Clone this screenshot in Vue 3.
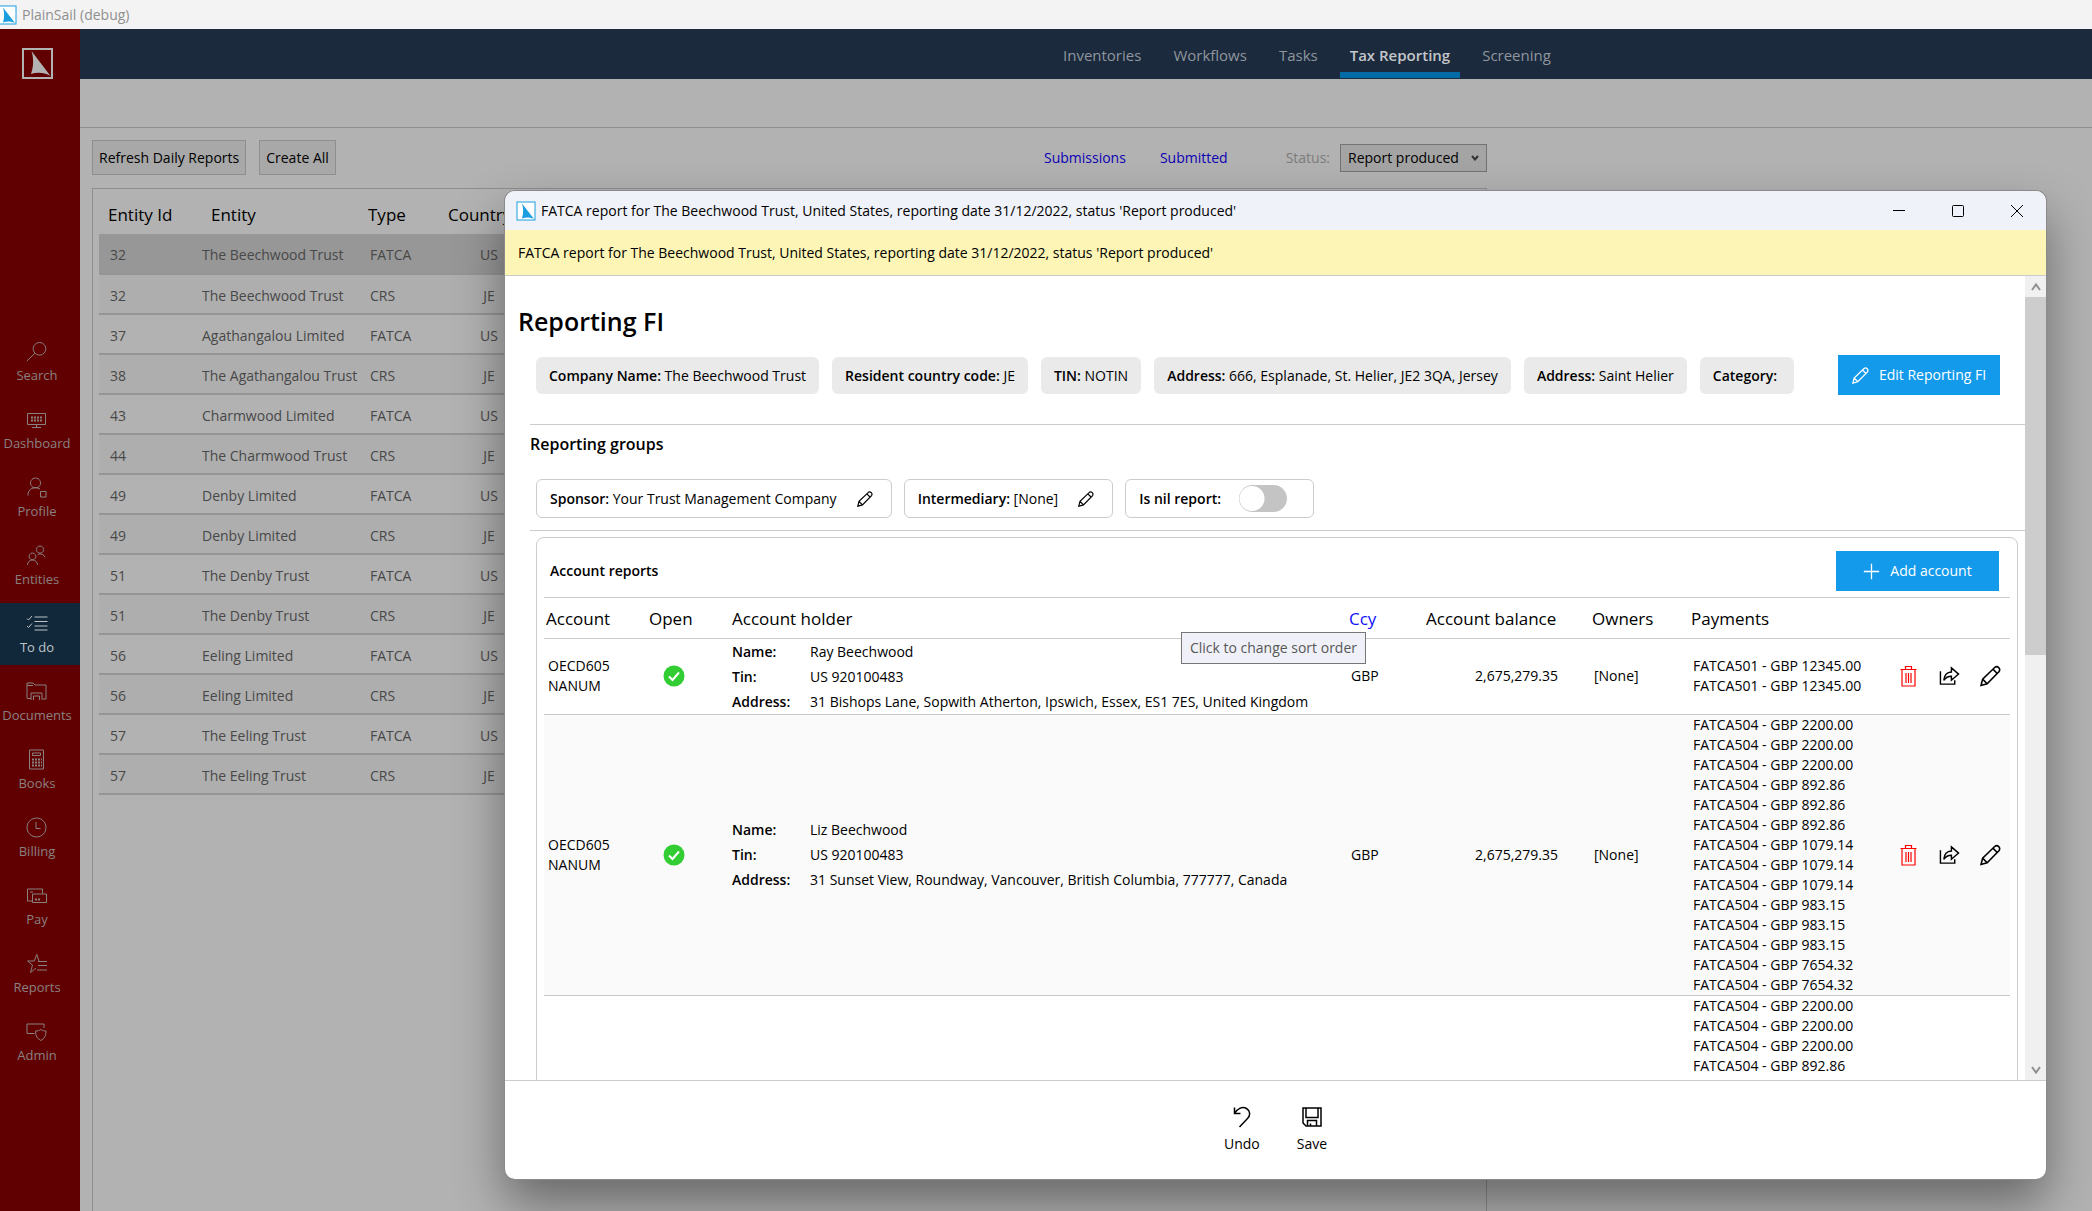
<script setup>
import { ref } from 'vue'

const dialogTitle = "FATCA report for The Beechwood Trust, United States, reporting date 31/12/2022, status 'Report produced'"
const tabs = ['Inventories', 'Workflows', 'Tasks', 'Tax Reporting', 'Screening']
const activeTab = ref('Tax Reporting')
const status = ref('Report produced')
const nil = ref(false)

const navItems = [
  { name: 'Search', d: ['M13.5 1.5a6.3 6.3 0 1 0 .01 0M9 12.2L.8 20'] },
  { name: 'Dashboard', d: ['M1.500 4.500h18v11h-18zM10.500 15.500v2.500M6 18.500h9'], dots: 'M5 8.500h11M5 11.500h11' },
  { name: 'Profile', d: ['M9.500 1a5 5 0 1 0 .01 0M2 18.500a7.500 7.500 0 0 1 12-6.500M14.500 14.500h5.500v5.500h-5.500z'] },
  { name: 'Entities', d: ['M14 1a3.600 3.600 0 1 0 .01 0M6.500 8a3.400 3.400 0 1 0 .01 0M1.500 20a5 5 0 0 1 10 0M11.800 9.500A5 5 0 0 1 19 12.500'] },
  { name: 'To do', d: ['M8.500 4h13M8.500 8.500h13M8.500 13h13M8.500 17h13M1 5.500l1.500 1.500 3.500-4M1 13l1.500 1.500 3.500-4'] },
  { name: 'Documents', d: ['M1 17V2h6l2 2h11v14h-3M1 4.500h6M1 17.500h4M5 19v-7h11v7M7.500 19v-4h6v4'] },
  { name: 'Books', d: ['M3.500 1h14v19h-14zM6.500 4h8v2.500h-8z'], dots: 'M6 10.500h10M6 13.500h10M6 16.500h10' },
  { name: 'Billing', d: ['M10.500 1a9.500 9.500 0 1 0 .01 0M10 5v6.500h4.500'] },
  { name: 'Pay', d: ['M6.500 16H1.500V4h15v4.500M6.500 9h14v8.500h-14zM4 7h3'], dots: 'M9 14.500h5' },
  { name: 'Reports', d: ['M13 8L10.800 1.500 8.200 8H1.500l5 4-2 7.500 5.500-4.500M12 8.500h9M12 12.500h9M11 17h10'] },
  { name: 'Admin', d: ['M8.500 12.500H1V3h17v4M14.800 8.500c2 1.200 3.500 1.500 5.200 1.500 0 5-1.500 7.500-5.200 9.500-3.700-2-5.300-4.500-5.300-9.500 2 0 3.500-.3 5.300-1.500z'] },
]

const entities = [
  ['32', 'The Beechwood Trust', 'FATCA', 'US'],
  ['32', 'The Beechwood Trust', 'CRS', 'JE'],
  ['37', 'Agathangalou Limited', 'FATCA', 'US'],
  ['38', 'The Agathangalou Trust', 'CRS', 'JE'],
  ['43', 'Charmwood Limited', 'FATCA', 'US'],
  ['44', 'The Charmwood Trust', 'CRS', 'JE'],
  ['49', 'Denby Limited', 'FATCA', 'US'],
  ['49', 'Denby Limited', 'CRS', 'JE'],
  ['51', 'The Denby Trust', 'FATCA', 'US'],
  ['51', 'The Denby Trust', 'CRS', 'JE'],
  ['56', 'Eeling Limited', 'FATCA', 'US'],
  ['56', 'Eeling Limited', 'CRS', 'JE'],
  ['57', 'The Eeling Trust', 'FATCA', 'US'],
  ['57', 'The Eeling Trust', 'CRS', 'JE'],
]

const facts = [
  ['Company Name:', 'The Beechwood Trust'],
  ['Resident country code:', 'JE'],
  ['TIN:', 'NOTIN'],
  ['Address:', '666, Esplanade, St. Helier, JE2 3QA, Jersey'],
  ['Address:', 'Saint Helier'],
  ['Category:', ''],
]

const pay = (code, ...amounts) => amounts.map((a) => `${code} - GBP ${a}`)
const accounts = [
  {
    name: 'Ray Beechwood',
    address: '31 Bishops Lane, Sopwith Atherton, Ipswich, Essex, ES1 7ES, United Kingdom',
    payments: pay('FATCA501', '12345.00', '12345.00'),
  },
  {
    name: 'Liz Beechwood',
    address: '31 Sunset View, Roundway, Vancouver, British Columbia, 777777, Canada',
    payments: pay('FATCA504', '2200.00', '2200.00', '2200.00', '892.86', '892.86', '892.86', '1079.14',
      '1079.14', '1079.14', '983.15', '983.15', '983.15', '7654.32', '7654.32'),
  },
]
const nextPayments = pay('FATCA504', '2200.00', '2200.00', '2200.00', '892.86')
const pencil = 'M1 19l1.500-6L14.200 1.700c2.600-1.800 5.700 1.200 4 4L6.800 17.400zM2.500 13l4.300 4.400M12.300 3.500l4.300 4.300'
</script>

<template>
  <div class="app">
    <header class="titlebar">
      <svg class="logo" viewBox="0 0 20 20"><rect x="1" y="1" width="18" height="18" /><path d="M6 2.500L18 18c-4-2-8-2-12-.5 1.500-5 1.500-10 0-15z" /></svg>
      <span>PlainSail (debug)</span>
    </header>

    <div class="body">
      <nav class="sidebar" aria-label="Main">
        <svg class="brand" viewBox="0 0 31 31"><rect x="1" y="1" width="29" height="29" /><path d="M9.500 3L28.500 28c-6-3.500-13-4-19.500-2 2.500-7 3-15 .5-23z" /></svg>
        <div class="side-items">
          <a v-for="n in navItems" :key="n.name" href="#" class="side" :class="{ on: n.name === 'To do' }">
            <svg viewBox="0 0 22 21"><path v-for="p in n.d" :key="p" :d="p" /><path v-if="n.dots" class="dots" :d="n.dots" /></svg>
            <span>{{ n.name }}</span>
          </a>
        </div>
      </nav>

      <div class="page">
        <nav class="topnav" aria-label="Sections">
          <a v-for="t in tabs" :key="t" href="#" class="tab" :class="{ on: t === activeTab }" @click.prevent="activeTab = t">{{ t }}</a>
        </nav>
        <div class="strip"></div>
        <main class="main">
          <div class="toolbar">
            <button class="tool">Refresh Daily Reports</button>
            <button class="tool">Create All</button>
            <div class="filters">
              <a href="#" class="flink">Submissions</a>
              <a href="#" class="flink">Submitted</a>
              <label for="status">Status:</label>
              <span class="selectwrap">
                <select id="status" v-model="status"><option>Report produced</option></select>
                <svg viewBox="0 0 8 6"><path d="M1 1l3 3.500L7 1" /></svg>
              </span>
            </div>
          </div>
          <section class="listbox">
            <table class="entities">
              <colgroup><col class="e1"><col class="e2"><col class="e3"><col class="e4"><col></colgroup>
              <thead>
                <tr><th>Entity Id</th><th>Entity</th><th>Type</th><th>Country</th><th></th></tr>
              </thead>
              <tbody>
                <tr v-for="(e, i) in entities" :key="i" :class="{ sel: i === 0 }">
                  <td>{{ e[0] }}</td><td>{{ e[1] }}</td><td>{{ e[2] }}</td><td>{{ e[3] }}</td><td></td>
                </tr>
              </tbody>
            </table>
          </section>
        </main>
      </div>
    </div>

    <section class="dialog" role="dialog" aria-labelledby="dlg-title">
      <header class="dlg-head">
        <svg class="logo" viewBox="0 0 20 20"><rect x="1" y="1" width="18" height="18" /><path d="M6 2.500L18 18c-4-2-8-2-12-.5 1.500-5 1.500-10 0-15z" /></svg>
        <span id="dlg-title">{{ dialogTitle }}</span>
        <div class="winbtns">
          <button aria-label="Minimize"><svg viewBox="0 0 14 14"><path d="M1 6.500h12" /></svg></button>
          <button aria-label="Maximize"><svg viewBox="0 0 14 14"><rect x="1.500" y="1.500" width="11" height="11" rx="1" /></svg></button>
          <button aria-label="Close"><svg viewBox="0 0 14 14"><path d="M1 1l12 12M13 1L1 13" /></svg></button>
        </div>
      </header>
      <p class="notice">{{ dialogTitle }}</p>

      <div class="scroller">
        <div class="content">
          <h1>Reporting FI</h1>
          <div class="facts">
            <span v-for="(f, i) in facts" :key="i" class="chip"><b>{{ f[0] }}</b> {{ f[1] }}</span>
            <button class="primary edit">
              <svg viewBox="0 0 20 20"><path :d="pencil" /></svg>Edit Reporting FI
            </button>
          </div>
          <div class="groups">
            <h2>Reporting groups</h2>
            <div class="group-row">
              <div class="box"><span><b>Sponsor:</b> Your Trust Management Company</span>
                <button class="iconbtn small" aria-label="Edit sponsor"><svg viewBox="0 0 20 20"><path :d="pencil" /></svg></button></div>
              <div class="box"><span><b>Intermediary:</b> [None]</span>
                <button class="iconbtn small" aria-label="Edit intermediary"><svg viewBox="0 0 20 20"><path :d="pencil" /></svg></button></div>
              <div class="box nil"><label for="nil"><b>Is nil report:</b></label>
                <input id="nil" v-model="nil" type="checkbox" class="switch"></div>
            </div>
          </div>

          <div class="panel">
            <div class="panel-head">
              <h3>Account reports</h3>
              <button class="primary add">
                <svg viewBox="0 0 20 20"><path d="M10 1v18M1 10h18" /></svg>Add account
              </button>
            </div>
            <table class="accounts">
              <colgroup><col class="c1"><col class="c2"><col class="c3"><col class="c4"><col class="c5"><col class="c6"><col class="c7"><col class="c8"></colgroup>
              <thead>
                <tr>
                  <th>Account</th><th>Open</th><th>Account holder</th>
                  <th class="ccy"><a href="#">Ccy</a><span class="tip" role="tooltip">Click to change sort order</span></th>
                  <th class="num">Account balance</th><th>Owners</th><th>Payments</th><th></th>
                </tr>
              </thead>
              <tbody>
                <tr v-for="a in accounts" :key="a.name">
                  <td class="acct">OECD605 NANUM</td>
                  <td class="open"><svg viewBox="0 0 22 22"><circle cx="11" cy="11" r="10.500" /><path d="M6 11.500l3.500 3.500L16 7.500" /></svg></td>
                  <td>
                    <dl>
                      <dt>Name:</dt><dd>{{ a.name }}</dd>
                      <dt>Tin:</dt><dd>US 920100483</dd>
                      <dt>Address:</dt><dd>{{ a.address }}</dd>
                    </dl>
                  </td>
                  <td class="cur">GBP</td>
                  <td class="num">2,675,279.35</td>
                  <td class="own">[None]</td>
                  <td class="pays"><div v-for="(p, i) in a.payments" :key="i">{{ p }}</div></td>
                  <td>
                    <div class="actions">
                      <button class="iconbtn del" aria-label="Delete"><svg viewBox="0 0 20 22"><path d="M2 4.500h16M7 4V1.500h6V4M3.500 4.500v16.500h13V4.500M7.500 8v10M10 8v10M12.500 8v10" /></svg></button>
                      <button class="iconbtn" aria-label="Share"><svg viewBox="0 0 22 22"><path d="M1.500 6v13.500h15v-4M5 15.500c.5-5.500 3.500-8.500 8-8.700V2.500l7.500 6.500-7.500 6.500v-4.300c-3.500 0-6 1.300-8 4.300z" /></svg></button>
                      <button class="iconbtn" aria-label="Edit"><svg viewBox="0 0 20 20"><path :d="pencil" /></svg></button>
                    </div>
                  </td>
                </tr>
                <tr class="partial">
                  <td colspan="6"></td>
                  <td class="pays"><div v-for="(p, i) in nextPayments" :key="i">{{ p }}</div></td>
                  <td></td>
                </tr>
              </tbody>
            </table>
          </div>
        </div>
        <div class="scrollbar" aria-hidden="true">
          <div class="arrow"><svg viewBox="0 0 10 10"><path d="M1 8l4-5.500L9 8" /></svg></div>
          <div class="track"><div class="thumb"></div></div>
          <div class="arrow"><svg viewBox="0 0 10 10"><path d="M1 2l4 5.500L9 2" /></svg></div>
        </div>
      </div>

      <footer class="dlg-foot">
        <button class="cmd"><svg viewBox="0 0 22 22"><path d="M3.500 1.500v6h6M3.500 7.500C6 3 11 0 15.500 2.500c4 2.500 4 7 1 10l-8 8.500" /></svg>Undo</button>
        <button class="cmd"><svg viewBox="0 0 22 22"><path d="M2 2h18v18H5l-3-3zM5 2v9.500h12V2M6.500 20v-5.500h9V20M9.500 20v-2.500" /></svg>Save</button>
      </footer>
    </section>
  </div>
</template>

<style>
body { margin: 0; }
</style>

<style scoped>
.app {
  position: relative;
  display: flex;
  flex-direction: column;
  height: 100vh;
  overflow: hidden;
  background: #b2b2b2;
  color: #000;
  font: 14px/20px "Open Sans", "Noto Sans", sans-serif;
}
* { box-sizing: border-box; }
a { text-decoration: none; color: inherit; }
button, select { font: inherit; color: inherit; }
button { padding: 0; border: 0; background: none; }
b { font-weight: 600; }
h1, h2, h3, p, dl, dd { margin: 0; }
svg { fill: none; stroke: currentColor; flex: none; }

.titlebar {
  display: flex;
  align-items: center;
  gap: 5px;
  height: 29px;
  flex: none;
  background: #f3f3f3;
  color: #8f8f8f;
}
.logo { width: 20px; height: 20px; }
.logo rect { fill: #fff; stroke: #1a9ee0; stroke-width: 1; }
.logo path { fill: #1a9ee0; stroke: none; }
.titlebar .logo { margin-left: -3px; }

.body { display: flex; flex: 1; min-height: 0; }
.sidebar {
  display: flex;
  flex-direction: column;
  width: 80px;
  flex: none;
  background: #600000;
  color: #898080;
}
.brand { width: 31px; height: 31px; margin: 19px 0 0 22px; color: #b2b2b2; }
.brand rect { stroke-width: 2; }
.brand path { fill: #b2b2b2; stroke: none; }
.side-items { display: flex; flex-direction: column; gap: 6px; margin-top: 252px; }
.side {
  display: flex;
  flex-direction: column;
  align-items: center;
  gap: 3px;
  height: 62px;
  padding: 10px 6px 0 0;
  font-size: 13px;
}
.side svg { width: 22px; height: 21px; stroke-width: 1; }
.side .dots { stroke-dasharray: 2 1; stroke-width: 2; }
.side.on { background: #10283a; color: #c0c4c8; }

.page { display: flex; flex-direction: column; flex: 1; min-width: 0; }
.topnav {
  display: flex;
  gap: 12px;
  height: 50px;
  flex: none;
  padding-left: 973px;
  background: #1b2a3c;
  color: #8f969f;
  font-size: 15px;
}
.tab { height: 49px; padding: 15px 10px 0; border-bottom: 6px solid transparent; line-height: 22px; }
.tab.on { border-color: #006ba4; color: #c3c6ca; font-weight: 600; }
.strip { height: 49px; flex: none; border-bottom: 1px solid #8e8e8e; }

.main { display: flex; flex-direction: column; flex: 1; width: 1407px; padding: 12px 0 0 12px; }
.toolbar { display: flex; align-items: center; gap: 13px; height: 35px; }
.tool { height: 35px; padding: 0 6px; border: 1px solid #8e8e8e; background: #a8a8a8; }
.filters { display: flex; align-items: center; margin-left: auto; color: #7c7c7c; }
.flink { margin-right: 34px; color: #0c00b4; }
.flink + label { margin: 0 10px 0 24px; }
.selectwrap { position: relative; }
.selectwrap select {
  display: block;
  width: 147px;
  height: 28px;
  padding: 0 7px;
  border: 1px solid #737373;
  border-radius: 0;
  background: #a4a4a4;
  color: #000;
  appearance: none;
}
.selectwrap svg { position: absolute; right: 8px; top: 11px; width: 8px; height: 6px; stroke: #333; stroke-width: 2; }
.listbox { flex: 1; margin-top: 13px; padding: 7px 6px 0; border: 1px solid #8e8e8e; border-bottom: 0; }

table { border-collapse: collapse; table-layout: fixed; width: 100%; }
th { font-size: 17px; font-weight: 400; text-align: left; padding: 0; white-space: nowrap; }
td { padding: 0; }
.e1 { width: 103px; }
.e2 { width: 165px; }
.e3 { width: 80px; }
.e4 { width: 84px; }
.entities th { height: 38px; padding-left: 9px; }
.entities td { height: 40px; padding: 3px 0 0 11px; border-bottom: 2px solid #959595; color: #484848; white-space: nowrap; }
.entities td:nth-child(2) { padding-left: 0; }
.entities td:nth-child(3) { padding-left: 3px; }
.entities th:nth-child(n+3) { padding-left: 1px; }
.entities td:nth-child(4) { padding-left: 0; text-align: center; }
.entities tbody tr:nth-child(even) { background: #aeaeae; }
.entities .sel { background: #979797; }

.dialog {
  position: absolute;
  inset: 191px 46px 32px 505px;
  display: flex;
  flex-direction: column;
  overflow: hidden;
  border-radius: 10px;
  background: #fff;
  box-shadow: 0 0 0 1px #8a8a8a, 0 24px 50px rgba(0, 0, 0, .42);
}
.dlg-head { display: flex; align-items: center; gap: 5px; height: 39px; flex: none; padding-left: 11px; background: #f0f2f9; }
.winbtns { display: flex; margin-left: auto; }
.winbtns button { display: grid; place-items: center; width: 59px; height: 38px; }
.winbtns svg { width: 14px; height: 14px; stroke-width: 1; }
.notice { height: 46px; flex: none; padding: 13px; background: #fcf5b6; border-bottom: 1px solid #ccc; }
.scroller { display: flex; flex: 1; min-height: 0; }
.content { flex: 1; min-width: 0; overflow: hidden; padding-top: 25px; }
h1 { padding-left: 13px; font-size: 25px; line-height: 40px; font-weight: 600; }
.facts { display: flex; align-items: center; gap: 13px; margin-left: 31px; padding: 14px 25px 29px 0; }
.chip { height: 37px; padding: 9px 13px; border-radius: 6px; background: #eaeaea; white-space: pre; }
.primary { display: flex; align-items: center; justify-content: center; gap: 10px; height: 40px; background: #149aea; color: #fff; }
.primary svg { width: 17px; height: 17px; stroke-width: 1.5; }
.edit { width: 162px; margin-left: auto; }
.add { width: 163px; }
.groups { margin-left: 25px; border-top: 1px solid #ccc; border-bottom: 1px solid #ccc; }
h2 { padding: 7px 0; font-size: 16px; line-height: 24px; font-weight: 600; }
.group-row { display: flex; gap: 12px; padding: 16px 0 12px 6px; }
.box { display: flex; align-items: center; gap: 20px; height: 39px; padding: 0 18px 0 13px; border: 1px solid #ccc; border-radius: 6px; white-space: nowrap; }
.iconbtn { display: grid; place-items: center; width: 22px; height: 24px; }
.iconbtn svg { width: 21px; height: 22px; stroke-width: 1.5; }
.iconbtn.small { width: 16px; }
.iconbtn.small svg { width: 16px; height: 16px; }
.iconbtn.del { color: #f00; }
.iconbtn.del svg { stroke-width: 1.2; }
.box.nil { gap: 18px; padding-right: 26px; }
.switch { appearance: none; width: 48px; height: 27px; margin: 0; border-radius: 14px; background: radial-gradient(circle at 13px 50%, #fff 12px, #c4c4c4 13px); }
.panel { margin: 6px 7px 0 31px; padding: 0 7px; min-height: 600px; border: 1px solid #ccc; border-radius: 8px; }
.panel-head { display: flex; align-items: center; justify-content: space-between; height: 60px; padding: 7px 11px 0 6px; border-bottom: 1px solid #ccc; }
h3 { font-size: 14px; font-weight: 600; }

.c1 { width: 98px; }
.c2 { width: 90px; }
.c4 { width: 77px; }
.c5 { width: 166px; }
.c6 { width: 99px; }
.c7 { width: 190px; }
.c8 { width: 131px; }
.accounts th { height: 40px; padding: 2px 0 0 2px; border-bottom: 1px solid #ccc; }
.accounts th:nth-child(2) { padding-left: 7px; }
.accounts th:nth-child(3) { padding-left: 0; }
.accounts th.num { text-align: right; padding-right: 38px; }
.accounts th.ccy { position: relative; color: #1010ff; }
.tip {
  position: absolute;
  top: 34px;
  right: 58px;
  height: 32px;
  padding: 5px 8px;
  border: 1px solid #767676;
  background: #f0f1f8;
  color: #575757;
  font-size: 14px;
  line-height: 20px;
}
.accounts td { border-bottom: 1px solid #c8c8c8; }
.accounts tbody tr:nth-child(even) { background: #fafafa; }
.acct { padding: 0 20px 0 4px; }
.open { padding-left: 21px; }
.open svg { display: block; width: 22px; height: 22px; }
.open circle { fill: #32cd32; stroke: none; }
.open path { stroke: #fff; stroke-width: 2; }
dl { display: grid; grid-template-columns: 78px 1fr; line-height: 25px; white-space: nowrap; }
dt { font-weight: 600; }
.accounts td.num { padding-right: 32px; text-align: right; }
.cur, .own, .pays { padding-left: 4px; }
.accounts .partial td { height: 130px; border: 0; vertical-align: top; }
.actions { display: flex; gap: 19px; padding-left: 18px; }

.scrollbar { display: flex; flex-direction: column; width: 21px; flex: none; background: #f0f0f0; }
.arrow { display: grid; place-items: center; height: 21px; color: #909090; }
.arrow svg { width: 10px; height: 10px; stroke-width: 2; }
.track { flex: 1; }
.thumb { height: 47%; background: #cdcdcd; }
.dlg-foot { display: flex; justify-content: center; gap: 37px; height: 99px; flex: none; padding-top: 25px; border-top: 1px solid #ccc; }
.cmd { display: flex; flex-direction: column; align-items: center; gap: 6px; height: 50px; }
.cmd svg { width: 22px; height: 22px; stroke-width: 1.5; }
</style>
